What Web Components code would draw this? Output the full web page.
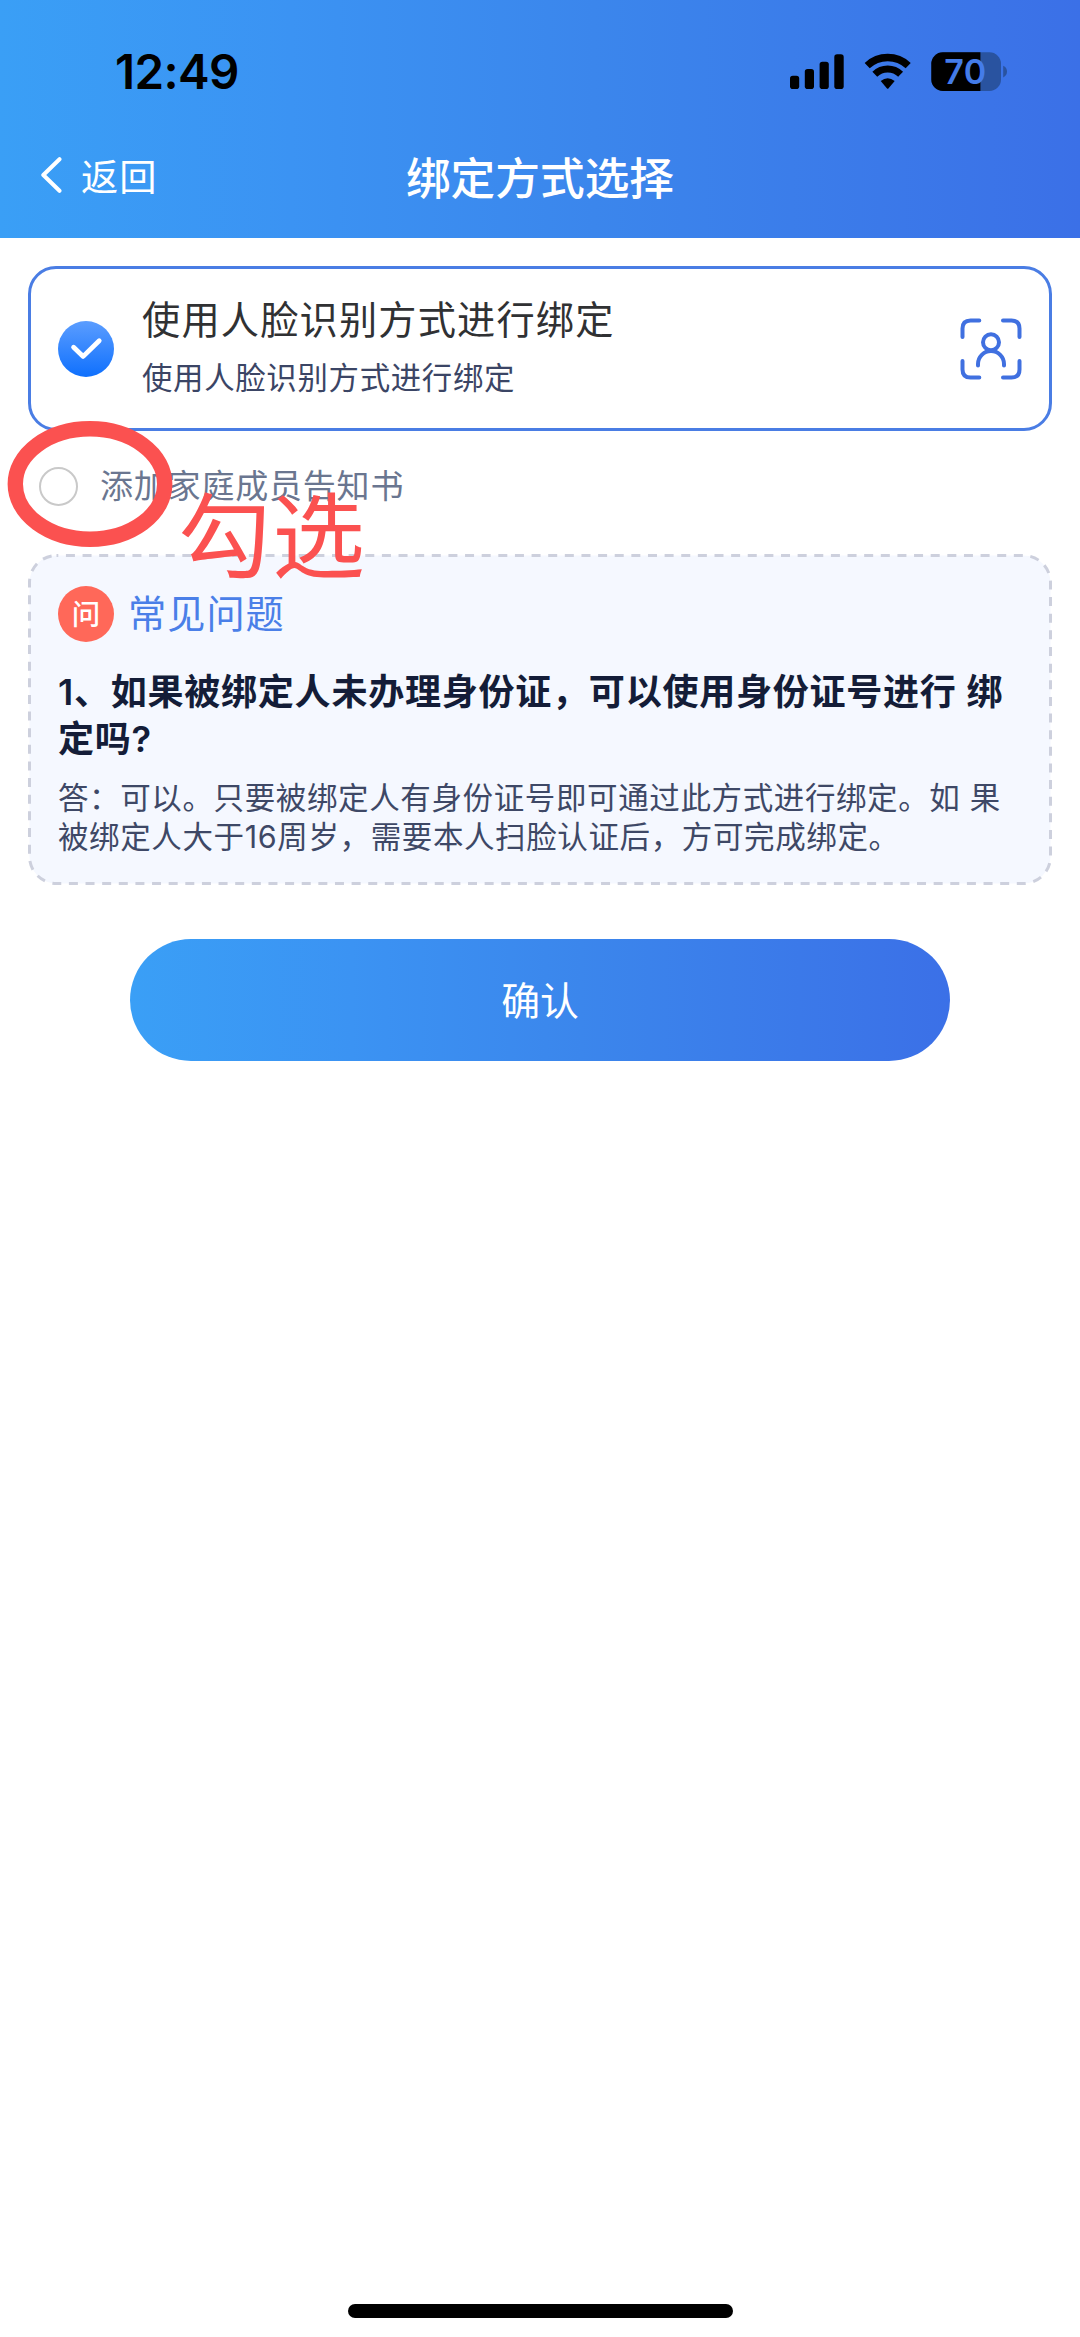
<!DOCTYPE html>
<html lang="zh-CN">
<head>
<meta charset="utf-8">
<title>绑定方式选择</title>
<style>
html,body{margin:0;padding:0;background:#fff}
</style>
</head>
<body>
<bind-page></bind-page>
<script>
const define = (name, html) => {
  const tpl = document.createElement('template');
  tpl.innerHTML = '<style>*{box-sizing:border-box}svg{display:block;flex:none}</style>' + html;
  customElements.define(name, class extends HTMLElement {
    constructor() {
      super();
      this.attachShadow({mode: 'open'}).appendChild(tpl.content.cloneNode(true));
    }
  });
};

define('status-bar', `
<style>
:host{display:flex;height:144px;align-items:center;justify-content:space-between;padding:0 72px 0 115px;color:#000;font-family:Inter,sans-serif}
.time{font-size:47.5px;font-weight:600;line-height:60px;letter-spacing:-.6px}
</style>
<span class="time">12:49</span>
<svg width="220" height="40" viewBox="788 52 220 40">
  <rect x="790" y="75.7" width="9.2" height="13.3" rx="2.8"/>
  <rect x="804.8" y="69" width="9.2" height="20" rx="2.8"/>
  <rect x="819.6" y="61.8" width="9.2" height="27.2" rx="2.8"/>
  <rect x="834.3" y="54.3" width="9.4" height="34.7" rx="2.8"/>
  <path d="M867.2 65.6A30 30 0 0 1 908.2 65.6" fill="none" stroke="#000" stroke-width="7.4"/>
  <path d="M874.8 74.2A18.6 18.6 0 0 1 900.6 74.2" fill="none" stroke="#000" stroke-width="7"/>
  <path d="M880.7 81.1Q887.7 75.3 894.7 81.1L888.6 88.2Q887.7 89.2 886.8 88.2Z"/>
  <clipPath id="b"><rect x="931.3" y="52.3" width="69.7" height="38.6" rx="11.5"/></clipPath>
  <g clip-path="url(#b)"><rect x="931" y="52" width="70" height="39" fill="#2953a0"/><rect x="931" y="52" width="49.4" height="39"/></g>
  <path d="M1003.2 65.8Q1007 67.5 1007 71.6Q1007 75.7 1003.2 77.4Z" fill="#2953a0"/>
  <text x="965.3" y="84" text-anchor="middle" font-size="34" font-weight="600" fill="#447ce9" textLength="42">70</text>
</svg>`);

define('nav-bar', `
<style>
:host{display:grid;grid-template-columns:1fr auto 1fr;align-items:center;height:64px;padding:0 40px;color:#fff;font-family:"Noto Sans CJK SC",sans-serif}
.back{display:flex;align-items:center;gap:19px;font-size:37.2px;letter-spacing:1px;line-height:60px}
.back svg{margin-bottom:2px}
.back span{padding-bottom:3px}
.title{font-size:44.7px;font-weight:500;line-height:64px}
</style>
<div class="back">
  <svg width="22" height="36" viewBox="0 0 22 36"><path d="M19.5 2.2L3.3 18L19.5 33.8" fill="none" stroke="#fff" stroke-width="4" stroke-linecap="round" stroke-linejoin="round"/></svg>
  <span>返回</span>
</div>
<div class="title"><slot></slot></div>`);

define('page-header', `
<style>:host{display:block;height:238px;background:linear-gradient(90deg,#3a9ff6,#3b93f3 27%,#3b86ec 55%,#3b70e7)}</style>
<slot></slot>`);

define('option-card', `
<style>
:host{display:flex;align-items:center;height:165px;margin:28px 28px 0;padding:0 27px;border:3px solid #4a7de4;border-radius:28px;font-family:"Noto Sans CJK SC",sans-serif}
.text{flex:1;display:flex;flex-direction:column;margin-left:28px;line-height:59px;padding-bottom:3px}
.t{font-size:38.2px;letter-spacing:1.2px;color:#303133}
.s{font-size:30.4px;letter-spacing:.7px;color:#3b4565}
</style>
<svg width="56" height="56" viewBox="0 0 56 56">
  <defs><linearGradient id="g" x1="0" y1="0" x2="0" y2="1"><stop offset="0" stop-color="#5b9dff"/><stop offset="1" stop-color="#0f70fd"/></linearGradient></defs>
  <circle cx="28" cy="28" r="28" fill="url(#g)"/>
  <path d="M15.6 26.2L25.2 35.4L41.2 19.8" fill="none" stroke="#fff" stroke-width="4.8" stroke-linecap="round" stroke-linejoin="round"/>
</svg>
<div class="text"><span class="t"><slot></slot></span><span class="s"><slot name="sub"></slot></span></div>
<svg width="62" height="62" viewBox="0 0 62 62" fill="none" stroke="#4070e0" stroke-width="4" stroke-linecap="round">
  <path d="M19.3 2.5H10.5Q2.5 2.5 2.5 10.5V19M43 2.5H51.5Q59.5 2.5 59.5 10.5V19M2.5 43V51.5Q2.5 59.5 10.5 59.5H19.3M43 59.5H51.5Q59.5 59.5 59.5 51.5V43"/>
  <circle cx="31" cy="24.2" r="8"/><path d="M18 47.5V46a13 13 0 0 1 26 0V47.5"/>
</svg>`);

define('agree-row', `
<style>
:host{display:flex;align-items:center;height:110px;padding-left:38.5px;font-family:"Noto Sans CJK SC",sans-serif;font-size:33px;letter-spacing:.8px;line-height:50px;color:#6a7690}
i{width:39px;height:39px;border:2.6px solid #c9c9c9;border-radius:50%;margin-right:22.5px}
span{padding-bottom:5px}
</style>
<i></i><span><slot></slot></span>`);

define('hand-mark', `
<style>
:host{position:absolute;left:0;top:415px;display:block;width:400px;height:190px;color:#fb5150;font-family:"Noto Sans CJK SC",sans-serif}
svg{position:absolute;left:0;top:0}
span{position:absolute;left:178px;top:66px;font-size:93px;letter-spacing:1px;line-height:100px;white-space:nowrap}
</style>
<svg width="180" height="140" viewBox="0 415 180 140"><ellipse cx="90" cy="484" rx="74.7" ry="55.2" fill="none" stroke="#fb5150" stroke-width="15.4"/></svg>
<span><slot></slot></span>`);

define('faq-panel', `
<style>
:host{display:grid;height:331px;margin:13px 28px 0}
.frame,.body{grid-area:1/1}
.body{padding:30px 20px 0 30px}
.head{display:flex;align-items:center;gap:14px;font-family:"Noto Sans CJK SC",sans-serif;color:#4a7fe8;font-size:38.2px;letter-spacing:1px;line-height:56px}
.badge{width:56px;height:56px;border-radius:50%;background:#ff6859;color:#fff;font-size:28.5px;letter-spacing:0;font-weight:500;text-align:center;line-height:53px}
.head b{font-weight:400;padding-bottom:4px;margin-bottom:-1px}
.q{margin-top:26px;font:600 36.1px/47px Inter,"Noto Sans CJK SC",sans-serif;letter-spacing:.7px;color:#141d38;white-space:nowrap}
.a{margin-top:15px;font:400 30.5px/39px Inter,"Noto Sans CJK SC",sans-serif;letter-spacing:.62px;color:#3e4866;white-space:nowrap}
</style>
<svg class="frame" width="1024" height="331" viewBox="0 0 1024 331"><rect x="1.5" y="1.5" width="1021" height="328" rx="27" fill="#f5f8ff" stroke="#cdd0dd" stroke-width="3" stroke-dasharray="9 7.63" stroke-dashoffset="7.2"/></svg>
<div class="body">
  <div class="head"><span class="badge">问</span><b>常见问题</b></div>
  <div class="q"><slot name="q"></slot></div>
  <div class="a"><slot name="a"></slot></div>
</div>`);

define('primary-button', `
<style>
:host{display:block;margin:54px 130px 0;height:122px;border-radius:61px;background:linear-gradient(90deg,#3a9ff6,#3b93f3 27%,#3b86ec 55%,#3b70e7);color:#fff;text-align:center;font:400 38.8px/119px "Noto Sans CJK SC",sans-serif}
</style><slot></slot>`);

define('home-indicator', `
<style>:host{display:block;width:385px;height:14px;border-radius:7px;background:#000;margin:auto 0 19px 348px}</style>`);

define('bind-page', `
<style>:host{display:flex;flex-direction:column;position:relative;width:1080px;height:2337px;background:#fff;overflow:hidden}</style>
<page-header><status-bar></status-bar><nav-bar>绑定方式选择</nav-bar></page-header>
<option-card>使用人脸识别方式进行绑定<span slot="sub">使用人脸识别方式进行绑定</span></option-card>
<agree-row>添加家庭成员告知书</agree-row>
<faq-panel>
  <span slot="q">1、如果被绑定人未办理身份证，可以使用身份证号进行 绑<br>定吗?</span>
  <span slot="a">答：可以。只要被绑定人有身份证号即可通过此方式进行绑定。如 果<br>被绑定人大于16周岁，需要本人扫脸认证后，方可完成绑定。</span>
</faq-panel>
<primary-button>确认</primary-button>
<home-indicator></home-indicator>
<hand-mark>勾选</hand-mark>`);
</script>
</body>
</html>
